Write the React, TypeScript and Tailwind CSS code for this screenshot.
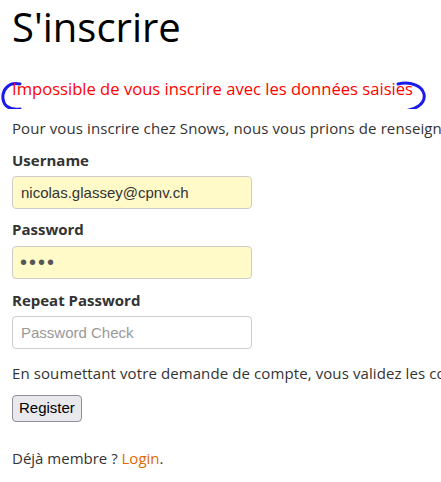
export default function App() {
  return (
    <div className="w-[441px] h-[482px] overflow-hidden bg-white px-3 font-['Open_Sans',sans-serif] text-[15px] text-[#333]">
      <h1 className="pt-[3px] text-[40px] leading-[48px] text-black">S'inscrire</h1>

      <div className="relative mt-[21px] h-[34px]">
        <svg className="absolute left-[-12px] top-[-3px]" width="441" height="40" viewBox="0 57 441 40" fill="none">
          <path d="M20 72 C 8 69, 2 79, 3 87 C 4 95, 11 98, 20 97" stroke="#1a1aeb" strokeWidth="3" strokeLinecap="round" />
          <path d="M398 72 C 411 69, 422 74, 424 82 C 426 92, 415 98, 403 99" stroke="#1a1aeb" strokeWidth="3" strokeLinecap="round" />
        </svg>
        <p className="relative text-[16.6px] leading-[34px] text-[#ff0000] whitespace-nowrap">Impossible de vous inscrire avec les données saisies</p>
      </div>

      <p className="mt-[12px] whitespace-nowrap leading-[20px] tracking-[0.1px]">
        Pour vous inscrire chez Snows, nous vous prions de renseigner les champs ci-dessous.
      </p>

      <form className="mt-[12px] flex flex-col">
        <label className="font-bold leading-[20px]">Username</label>
        <input
          defaultValue="nicolas.glassey@cpnv.ch"
          className="mt-[6px] h-[33px] w-[240px] rounded-[4px] border border-[#ccc] bg-[#fffac8] px-[8px] font-['Liberation_Sans',Arial,sans-serif] text-[15px] text-[#333] outline-none"
        />

        <label className="mt-[10px] font-bold leading-[20px]">Password</label>
        <input
          type="password"
          defaultValue="abcd"
          className="mt-[7px] h-[33px] w-[240px] rounded-[4px] border border-[#ccc] bg-[#fffac8] px-[7px] font-['Liberation_Sans',Arial,sans-serif] text-[20px] tracking-[2px] text-[#555] outline-none"
        />

        <label className="mt-[11px] font-bold leading-[20px]">Repeat Password</label>
        <input
          type="password"
          placeholder="Password Check"
          className="mt-[6px] h-[33px] w-[240px] rounded-[4px] border border-[#ccc] bg-white px-[8px] font-['Liberation_Sans',Arial,sans-serif] text-[15px] text-[#333] placeholder:text-[#999] outline-none"
        />

        <p className="mt-[14px] whitespace-nowrap leading-[20px] tracking-[0.1px]">
          En soumettant votre demande de compte, vous validez les conditions générales d'utilisation.
        </p>

        <div className="mt-[12px]">
          <button
            type="button"
            className="h-[27px] rounded-[4px] border border-[#8f8f9d] bg-[#e9e9ed] px-[6px] font-['Liberation_Sans',Arial,sans-serif] text-[15px] text-black"
          >
            Register
          </button>
        </div>
      </form>

      <p className="mt-[26px] leading-[20px]">
        Déjà membre ? <a href="#" className="text-[#e06a00]">Login</a>.
      </p>
    </div>
  );
}
